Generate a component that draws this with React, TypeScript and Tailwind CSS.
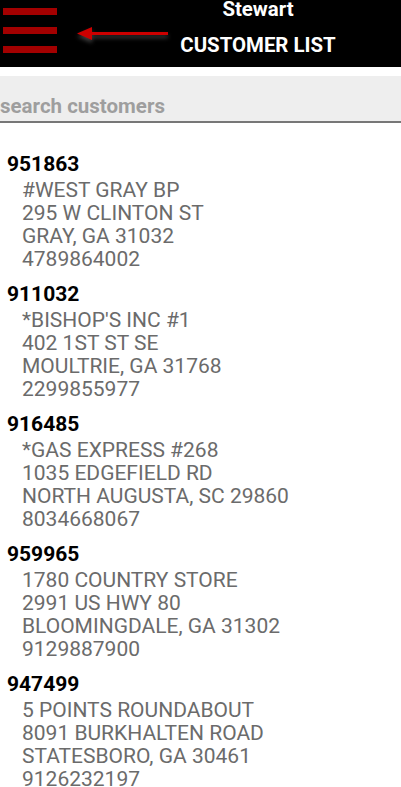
import React from "react";

const customers = [
  { id: "951863", name: "#WEST GRAY BP", street: "295 W CLINTON ST", city: "GRAY, GA 31032", phone: "4789864002" },
  { id: "911032", name: "*BISHOP'S INC #1", street: "402 1ST ST SE", city: "MOULTRIE, GA 31768", phone: "2299855977" },
  { id: "916485", name: "*GAS EXPRESS #268", street: "1035 EDGEFIELD RD", city: "NORTH AUGUSTA, SC 29860", phone: "8034668067" },
  { id: "959965", name: "1780 COUNTRY STORE", street: "2991 US HWY 80", city: "BLOOMINGDALE, GA 31302", phone: "9129887900" },
  { id: "947499", name: "5 POINTS ROUNDABOUT", street: "8091 BURKHALTEN ROAD", city: "STATESBORO, GA 30461", phone: "9126232197" },
];

function Header() {
  return (
    <div className="relative flex h-[67px] w-full bg-black">
      <div className="w-[115px] shrink-0">
        <div className="ml-[3px] mt-[8px] flex w-[54px] flex-col gap-[12px]">
          <div className="h-[7px] w-full bg-[#a30000]" />
          <div className="h-[7px] w-full bg-[#a30000]" />
          <div className="h-[7px] w-full bg-[#a30000]" />
        </div>
      </div>
      {/* hint arrow pointing at the menu */}
      <svg
        className="absolute left-[77px] top-[26px] drop-shadow-[0_3px_2px_rgba(70,70,70,0.9)]"
        width="92"
        height="16"
        viewBox="0 0 92 16"
      >
        <polygon points="0,7.5 15,1 15,14" fill="#cc0000" />
        <rect x="14" y="6" width="77" height="3" fill="#cc0000" />
      </svg>
      <div className="flex flex-1 flex-col items-center text-[20.4px] font-bold text-white">
        <div className="leading-[18px]">Stewart</div>
        <div className="mt-[18px] leading-[18px]">CUSTOMER LIST</div>
      </div>
    </div>
  );
}

function CustomerItem({ c }: { c: (typeof customers)[number] }) {
  return (
    <div>
      <div className="pl-[7px] text-[21px] font-bold leading-[23px] text-black">{c.id}</div>
      <div className="mt-[2.7px] pl-[22px] text-[21px] leading-[23.1px] text-[#6b6b6b]">
        <div>{c.name}</div>
        <div>{c.street}</div>
        <div>{c.city}</div>
        <div>{c.phone}</div>
      </div>
    </div>
  );
}

export default function App() {
  return (
    <div className="h-[787px] w-[401px] overflow-hidden bg-white font-['Roboto',sans-serif]">
      <Header />
      <div className="mt-[9px] bg-[#eeeeee]">
        <input
          type="text"
          placeholder="search customers"
          className="block h-[47px] w-full border-b-2 border-[#777777] bg-transparent pb-[3px] pl-0 pt-[18px] text-[20.5px] leading-[24px] outline-none placeholder:font-bold placeholder:text-[#9e9e9e]"
        />
      </div>
      <div className="flex flex-col gap-[12px] pt-[30px]">
        {customers.map((c) => (
          <CustomerItem key={c.id} c={c} />
        ))}
      </div>
    </div>
  );
}
